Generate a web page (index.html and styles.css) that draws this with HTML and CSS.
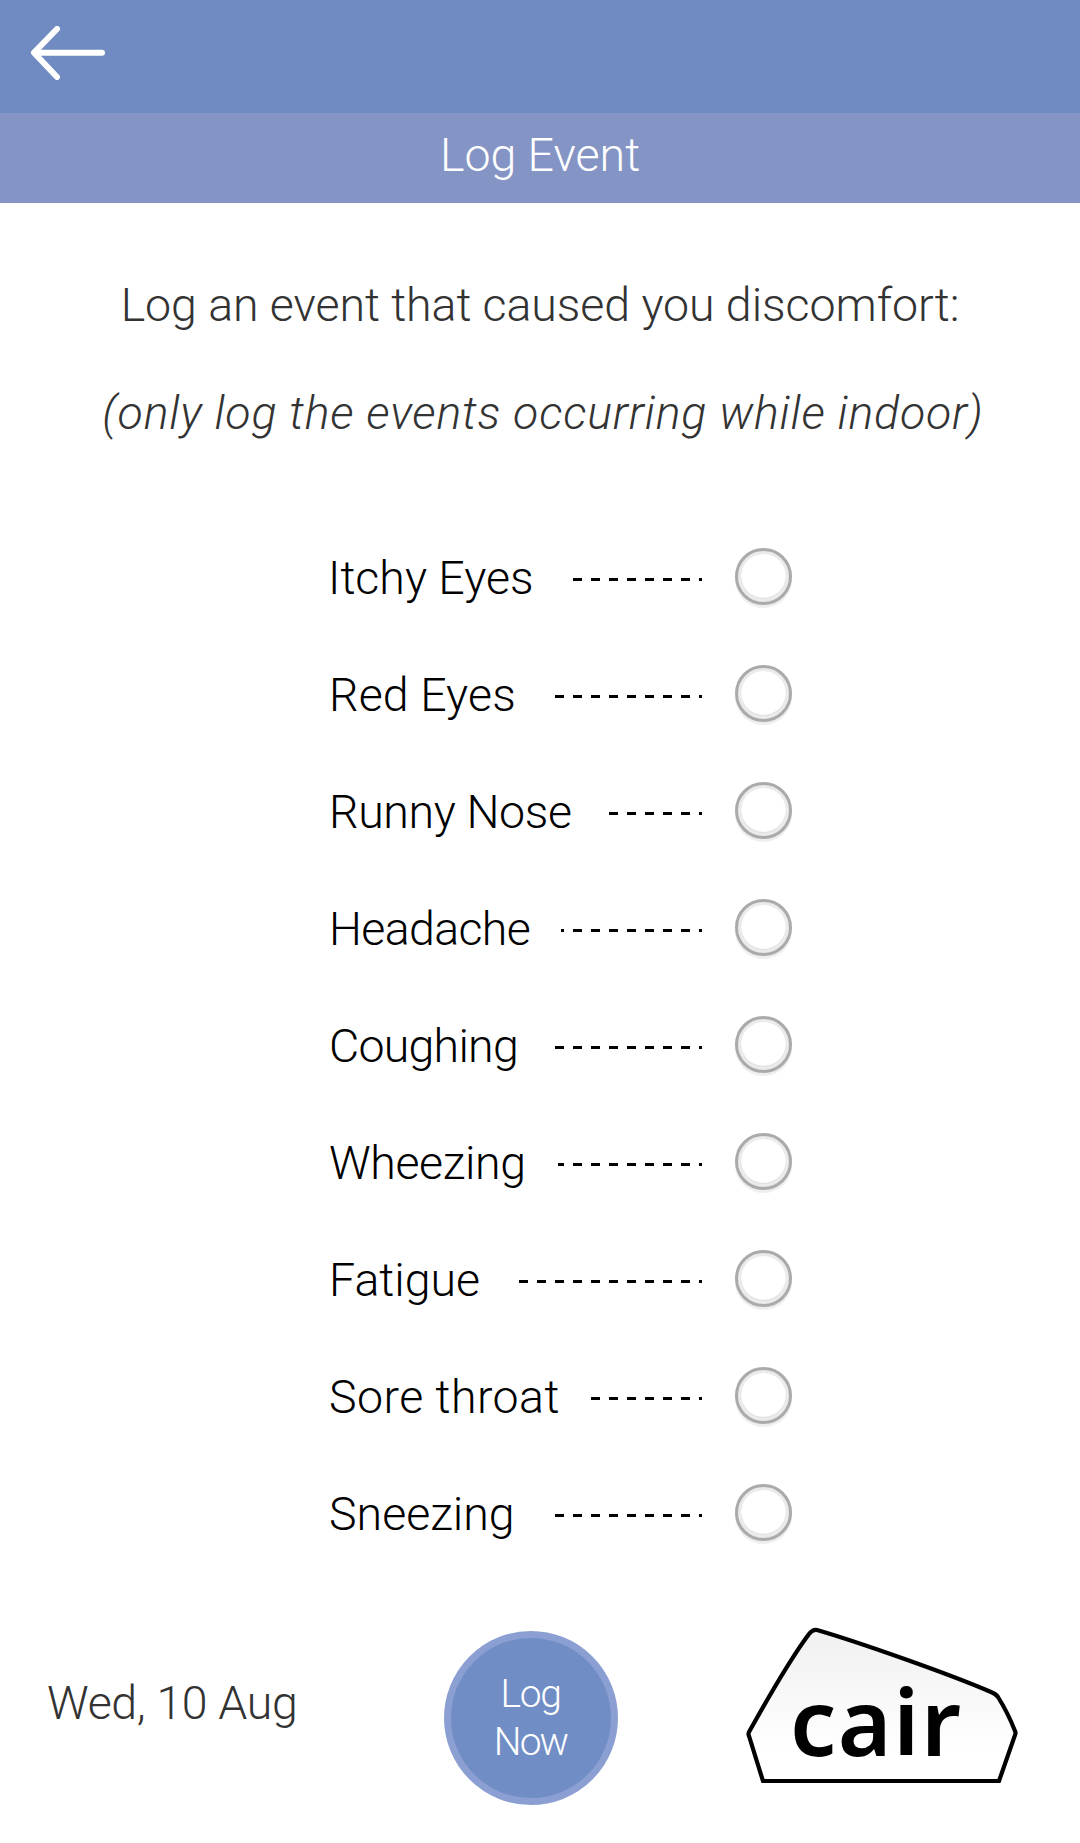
FILE: index.html
```html
<!DOCTYPE html>
<html lang="en">
<head>
    <meta charset="UTF-8">
    <meta name="viewport" content="width=device-width, initial-scale=1.0">
    <title>Log Event</title>
    <link rel="stylesheet" href="styles.css">
</head>
<body>
    <header class="topbar">
        <a class="back" href="#" aria-label="Back">
            <svg width="75" height="54" viewBox="0 0 75 54" fill="none" stroke="#fff" stroke-width="6" stroke-linecap="round" stroke-linejoin="round">
                <path d="M72 26.7H4.5M27 3L4 26.7L27 51"/>
            </svg>
        </a>
    </header>
    <h1 class="title">Log Event</h1>

    <div class="intro">
        <p class="desc">Log an event that caused you discomfort:</p>
        <p class="note">(only log the events occurring while indoor)</p>
    </div>

    <form class="events">
        <label class="event itchy"><span class="name">Itchy Eyes</span><span class="line"></span><input type="radio" name="event" value="itchy"></label>
        <label class="event red"><span class="name">Red Eyes</span><span class="line"></span><input type="radio" name="event" value="red"></label>
        <label class="event runny"><span class="name">Runny Nose</span><span class="line"></span><input type="radio" name="event" value="runny"></label>
        <label class="event headache"><span class="name">Headache</span><span class="line"></span><input type="radio" name="event" value="headache"></label>
        <label class="event coughing"><span class="name">Coughing</span><span class="line"></span><input type="radio" name="event" value="coughing"></label>
        <label class="event wheezing"><span class="name">Wheezing</span><span class="line"></span><input type="radio" name="event" value="wheezing"></label>
        <label class="event fatigue"><span class="name">Fatigue</span><span class="line"></span><input type="radio" name="event" value="fatigue"></label>
        <label class="event throat"><span class="name">Sore throat</span><span class="line"></span><input type="radio" name="event" value="throat"></label>
        <label class="event sneezing"><span class="name">Sneezing</span><span class="line"></span><input type="radio" name="event" value="sneezing"></label>
    </form>

    <footer class="bottom">
        <p class="date">Wed, 10 Aug</p>
        <button class="log-button" type="button"><span>Log</span><span class="now">Now</span></button>
        <svg class="logo" width="276" height="160" viewBox="0 0 276 160">
            <defs>
                <linearGradient id="shade" x1="0" y1="0" x2="0" y2="1">
                    <stop offset="0" stop-color="#f0f0f0"/>
                    <stop offset="0.8" stop-color="#ffffff"/>
                </linearGradient>
            </defs>
            <path d="M19 154L5 109Q4 107 5 105Q44 35 65 7Q69 2 73 3C111 14 203 46 247 65Q252 67 254 70Q264 86 271 104Q272 106 271 108L255 154Z" fill="url(#shade)" stroke="#000" stroke-width="4.2"/>
            <text x="46" y="129" class="logo-text" textLength="171">cair</text>
        </svg>
    </footer>
</body>
</html>
```
FILE: styles.css
```css
* {
    box-sizing: border-box;
}
body {
    margin: 0;
    width: 1080px;
    height: 1843px;
    background-color: #fff;
    font-family: Roboto, 'Liberation Sans', sans-serif;
    font-size: 46.5px;
    font-weight: 300;
    color: #333;
    overflow: hidden;
}
p {
    margin: 0;
}
.topbar {
    height: 113px;
    padding: 26px 0 0 30px;
    background-color: #6f8bc1;
}
.back {
    display: block;
    width: 75px;
    height: 54px;
}
.title {
    margin: 0;
    height: 90px;
    padding-top: 2px;
    background-color: #8495c5;
    color: #fff;
    font-size: 46.5px;
    font-weight: 300;
    line-height: 80px;
    text-align: center;
}
.intro {
    height: 315px;
    padding-top: 66px;
    text-align: center;
    white-space: nowrap;
}
.desc, .note {
    line-height: 72px;
}
.desc {
    letter-spacing: -0.06px;
}
.note {
    margin-top: 36px;
    padding-left: 6px;
    font-style: italic;
    letter-spacing: 0.8px;
}

/* event list */
.events {
    margin-left: 328px;
    width: 464px;
    color: #000;
}
.event {
    display: flex;
    align-items: center;
    height: 117px;
}
.name {
    padding: 3px 0 0 1px;
    white-space: nowrap;
}
.line {
    width: 147px;
    height: 3px;
    margin: 6px 33px 0 auto;
    background: linear-gradient(to left, #000 3px, transparent 3px, transparent 12px, #000 12px) right top / 18px 3px;
}
.event input {
    appearance: none;
    width: 57px;
    height: 57px;
    margin: 0;
    border: 3px solid #aaa;
    border-radius: 50%;
    background-color: #fff;
    box-shadow: inset 0 0 0 3px #ebebeb, inset 0 -1px 1px 3px #ddd, 0 3px 1px #eee;
}
.itchy .name {
    padding-left: 0;
}
.itchy .line {
    width: 129px;
}
.red {
    letter-spacing: 0.1px;
}
.runny {
    letter-spacing: -0.37px;
}
.runny .line {
    width: 93px;
}
.headache {
    letter-spacing: -0.65px;
}
.headache .line {
    width: 141px;
}
.coughing {
    letter-spacing: -0.75px;
}
.wheezing {
    letter-spacing: -0.4px;
}
.wheezing .line {
    width: 144px;
}
.fatigue .line {
    width: 183px;
}
.throat {
    letter-spacing: 0.45px;
}
.throat .line {
    width: 111px;
}

.bottom {
    display: grid;
    grid-template-columns: 397px 300px 276px;
    align-items: start;
    padding: 56px 0 0 47px;
}
.date {
    margin-top: 46px;
    letter-spacing: -0.34px;
    line-height: 60px;
}
.log-button {
    display: flex;
    flex-direction: column;
    align-items: center;
    justify-content: center;
    width: 174px;
    height: 174px;
    margin-top: 4px;
    padding: 0 1px 0 0;
    border: 7px solid #8b9fd2;
    border-radius: 50%;
    background-color: #708dc5;
    color: #fff;
    font: 300 39px/48px Roboto, 'Liberation Sans', sans-serif;
    letter-spacing: -1.4px;
}
.now {
    letter-spacing: -1.9px;
}
.logo-text {
    font-family: 'Noto Sans', 'Open Sans', sans-serif;
    font-size: 92px;
    font-weight: 600;
}
```
